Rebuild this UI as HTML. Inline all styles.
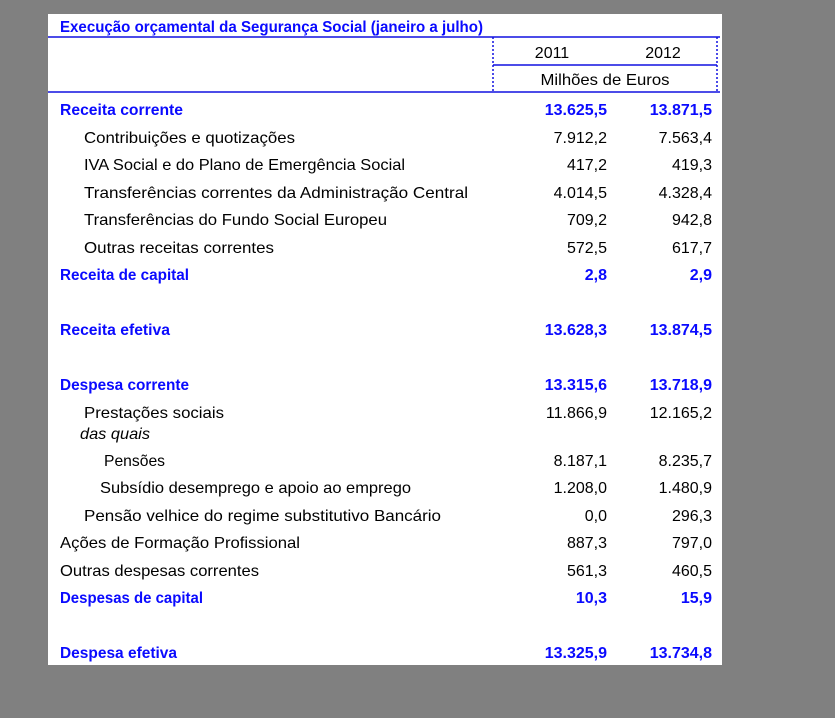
<!DOCTYPE html>
<html><head><meta charset="utf-8"><style>
html,body{margin:0;padding:0;background:#808080;}
svg{display:block}
text{font-family:"Liberation Sans",sans-serif;font-size:16px;fill:#000}
.b{font-weight:bold;fill:#0a0aff}
.n{text-anchor:end}
</style></head><body>
<svg width="835" height="718" xmlns="http://www.w3.org/2000/svg">
<rect x="0" y="0" width="835" height="718" fill="#808080"/>
<rect x="48" y="14" width="674" height="651" fill="#fff"/>
<line x1="48" y1="37" x2="720" y2="37" stroke="#1010e0" stroke-width="1.5"/>
<line x1="493" y1="65" x2="717" y2="65" stroke="#1010e0" stroke-width="1.5"/>
<line x1="48" y1="92" x2="720" y2="92" stroke="#1010e0" stroke-width="1.5"/>
<line x1="493" y1="37" x2="493" y2="92" stroke="#1010e0" stroke-width="1.5" stroke-dasharray="2,2"/>
<line x1="717" y1="37" x2="717" y2="92" stroke="#1010e0" stroke-width="1.5" stroke-dasharray="2,2"/>
<text class="b" x="60" y="32" font-size="15" textLength="423" lengthAdjust="spacingAndGlyphs">Execução orçamental da Segurança Social (janeiro a julho)</text>
<text x="552" y="58" text-anchor="middle">2011</text>
<text x="663" y="58" text-anchor="middle">2012</text>
<text x="605" y="85" text-anchor="middle" textLength="129" lengthAdjust="spacingAndGlyphs">Milhões de Euros</text>

<text class="b" x="60" y="115" textLength="123" lengthAdjust="spacingAndGlyphs">Receita corrente</text>
<text class="b n" x="607" y="115">13.625,5</text><text class="b n" x="712" y="115">13.871,5</text>

<text x="84" y="143" textLength="211" lengthAdjust="spacingAndGlyphs">Contribuições e quotizações</text>
<text class="n" x="607" y="143">7.912,2</text><text class="n" x="712" y="143">7.563,4</text>

<text x="84" y="170" textLength="321" lengthAdjust="spacingAndGlyphs">IVA Social e do Plano de Emergência Social</text>
<text class="n" x="607" y="170">417,2</text><text class="n" x="712" y="170">419,3</text>

<text x="84" y="198" textLength="384" lengthAdjust="spacingAndGlyphs">Transferências correntes da Administração Central</text>
<text class="n" x="607" y="198">4.014,5</text><text class="n" x="712" y="198">4.328,4</text>

<text x="84" y="225" textLength="303" lengthAdjust="spacingAndGlyphs">Transferências do Fundo Social Europeu</text>
<text class="n" x="607" y="225">709,2</text><text class="n" x="712" y="225">942,8</text>

<text x="84" y="253" textLength="190" lengthAdjust="spacingAndGlyphs">Outras receitas correntes</text>
<text class="n" x="607" y="253">572,5</text><text class="n" x="712" y="253">617,7</text>

<text class="b" x="60" y="280" textLength="129" lengthAdjust="spacingAndGlyphs">Receita de capital</text>
<text class="b n" x="607" y="280">2,8</text><text class="b n" x="712" y="280">2,9</text>

<text class="b" x="60" y="335" textLength="110" lengthAdjust="spacingAndGlyphs">Receita efetiva</text>
<text class="b n" x="607" y="335">13.628,3</text><text class="b n" x="712" y="335">13.874,5</text>

<text class="b" x="60" y="390" textLength="129" lengthAdjust="spacingAndGlyphs">Despesa corrente</text>
<text class="b n" x="607" y="390">13.315,6</text><text class="b n" x="712" y="390">13.718,9</text>

<text x="84" y="418" textLength="140" lengthAdjust="spacingAndGlyphs">Prestações sociais</text>
<text class="n" x="607" y="418">11.866,9</text><text class="n" x="712" y="418">12.165,2</text>
<text x="80" y="439" font-style="italic" textLength="70" lengthAdjust="spacingAndGlyphs">das quais</text>

<text x="104" y="466" textLength="61" lengthAdjust="spacingAndGlyphs">Pensões</text>
<text class="n" x="607" y="466">8.187,1</text><text class="n" x="712" y="466">8.235,7</text>

<text x="100" y="493" textLength="311" lengthAdjust="spacingAndGlyphs">Subsídio desemprego e apoio ao emprego</text>
<text class="n" x="607" y="493">1.208,0</text><text class="n" x="712" y="493">1.480,9</text>

<text x="84" y="521" textLength="357" lengthAdjust="spacingAndGlyphs">Pensão velhice do regime substitutivo Bancário</text>
<text class="n" x="607" y="521">0,0</text><text class="n" x="712" y="521">296,3</text>

<text x="60" y="548" textLength="240" lengthAdjust="spacingAndGlyphs">Ações de Formação Profissional</text>
<text class="n" x="607" y="548">887,3</text><text class="n" x="712" y="548">797,0</text>

<text x="60" y="576" textLength="199" lengthAdjust="spacingAndGlyphs">Outras despesas correntes</text>
<text class="n" x="607" y="576">561,3</text><text class="n" x="712" y="576">460,5</text>

<text class="b" x="60" y="603" textLength="143" lengthAdjust="spacingAndGlyphs">Despesas de capital</text>
<text class="b n" x="607" y="603">10,3</text><text class="b n" x="712" y="603">15,9</text>

<text class="b" x="60" y="658" textLength="117" lengthAdjust="spacingAndGlyphs">Despesa efetiva</text>
<text class="b n" x="607" y="658">13.325,9</text><text class="b n" x="712" y="658">13.734,8</text>
</svg>
</body></html>
